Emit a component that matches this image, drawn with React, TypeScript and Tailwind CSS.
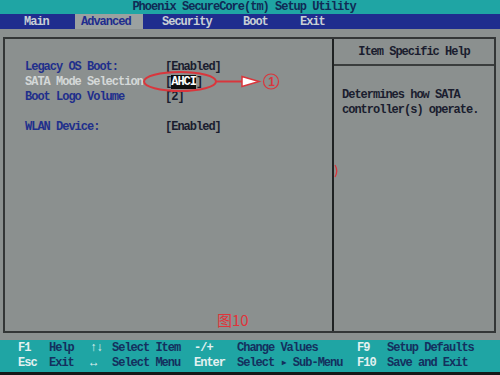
import React from "react";

const mono = "font-['Liberation_Mono','DejaVu_Sans_Mono',monospace] text-[12px] tracking-[-1px] font-bold";

const menus = [
  { label: "Main", w: "w-[51px]", pl: "pl-[24px]" },
  { label: "Advanced", w: "w-[68px]", pl: "pl-[6px]", active: true },
  { label: "Security", w: "w-[100px]", pl: "pl-[19px]" },
  { label: "Boot", w: "w-[57px]", pl: "pl-[0px]" },
  { label: "Exit", w: "w-[60px]", pl: "pl-[0px]" },
];

const footer = [
  ["F1", "Help", "↑↓", "Select Item", "-/+", "Change Values", "F9", "Setup Defaults"],
  ["Esc", "Exit", "↔", "Select Menu", "Enter", "Select ▸ Sub-Menu", "F10", "Save and Exit"],
];

function Annotation() {
  return (
    <svg className="absolute left-[116px] top-[-5px]" width="145" height="24" viewBox="0 0 145 24">
      <ellipse cx="39" cy="11.5" rx="36" ry="9.5" fill="none" stroke="#d9363c" strokeWidth="2" />
      <line x1="75" y1="11.5" x2="101" y2="11.5" stroke="#d9363c" strokeWidth="2" />
      <polygon points="101,6.5 118,11.5 101,16.5" fill="#ffffff" stroke="#d9363c" strokeWidth="1.5" />
      <circle cx="130" cy="11.5" r="7.5" fill="none" stroke="#d9363c" strokeWidth="1.2" />
      <text x="130" y="16" textAnchor="middle" fontSize="12" fill="#d9363c" fontFamily="Liberation Sans, sans-serif">1</text>
    </svg>
  );
}

export default function App() {
  return (
    <div className={`flex h-[375px] w-[500px] flex-col overflow-hidden bg-[#8b908f] ${mono}`}>
      <div className="flex h-[14px] items-center justify-center bg-[#1fa5a4] leading-none text-[#102a55]">
        <span className="-translate-x-[6px]">Phoenix SecureCore(tm) Setup Utility</span>
      </div>
      <div className="flex h-[15px] items-center bg-[#1f2d8e] leading-none text-[#c9d0d6]">
        {menus.map((m) => (
          <div
            key={m.label}
            className={`flex h-full items-center ${m.w} ${m.pl} ${m.active ? "ml-[24px] bg-[#9ba1a0] text-[#1f2d8e] pl-[6px]" : ""}`}
          >
            {m.label}
          </div>
        ))}
      </div>
      <div className="flex flex-1 flex-col pb-[7px] pl-[3px] pr-[4px] pt-[8px]">
        <div className="flex flex-1 border-2 border-[#333636]">
          <div className="relative w-[329px] border-r-2 border-[#1f2222] pl-[20px] pt-[21px] leading-[15px]">
            <div className="flex text-[#1f2f8c]">
              <span className="w-[140px]">Legacy OS Boot:</span>
              <span className="text-[#1a1d2e]">[Enabled]</span>
            </div>
            <div className="relative flex text-[#d4d8d8]">
              <span className="w-[140px]">SATA Mode Selection</span>
              <span className="text-[#1a1d2e]">
                [<span className="bg-[#0e0e0e] text-white">AHCI</span>]
              </span>
              <Annotation />
            </div>
            <div className="flex text-[#1f2f8c]">
              <span className="w-[140px]">Boot Logo Volume</span>
              <span className="text-[#1a1d2e]">[2]</span>
            </div>
            <div className="h-[15px]" />
            <div className="flex text-[#1f2f8c]">
              <span className="w-[140px]">WLAN Device:</span>
              <span className="text-[#1a1d2e]">[Enabled]</span>
            </div>
            <svg className="absolute right-[-7px] top-[125px]" width="5" height="14" viewBox="0 0 5 14">
              <path d="M1 1 Q4.5 7 1 13" fill="none" stroke="#d9363c" strokeWidth="1.3" />
            </svg>
            <div className="absolute bottom-[4px] left-[212px] font-['Noto_Sans_CJK_SC',sans-serif] text-[15px] font-normal tracking-normal leading-none text-[#e0343a]">
              图10
            </div>
          </div>
          <div className="flex flex-1 flex-col text-[#1a1d2e]">
            <div className="flex h-[27px] items-center justify-center border-b-2 border-[#3a3d3d] leading-none">
              Item Specific Help
            </div>
            <div className="pl-[8px] pt-[22px] leading-[15px]">
              <div>Determines how SATA</div>
              <div>controller(s) operate.</div>
            </div>
          </div>
        </div>
      </div>
      <div className="flex h-[32px] flex-col justify-center bg-[#1fa5a4] leading-[15px]">
        {footer.map((row, i) => (
          <div key={i} className="flex">
            <span className="w-[49px] pl-[18px] text-[#e3f1f1]">{row[0]}</span>
            <span className="w-[41px] text-[#14305e]">{row[1]}</span>
            <span className="w-[22px] text-[#e3f1f1]">{row[2]}</span>
            <span className="w-[82px] text-[#14305e]">{row[3]}</span>
            <span className="w-[43px] text-[#e3f1f1]">{row[4]}</span>
            <span className="w-[120px] text-[#14305e]">{row[5]}</span>
            <span className="w-[30px] text-[#e3f1f1]">{row[6]}</span>
            <span className="text-[#14305e]">{row[7]}</span>
          </div>
        ))}
      </div>
      <div className="h-[3px] bg-[#161818]" />
    </div>
  );
}
